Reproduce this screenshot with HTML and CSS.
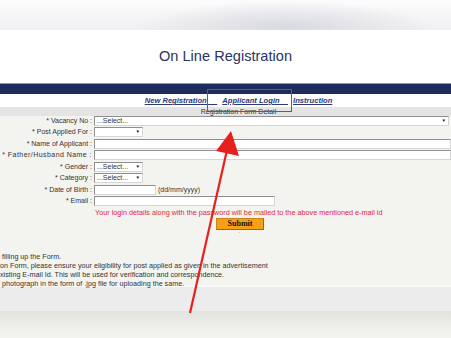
FILE: index.html
```html
<!DOCTYPE html>
<html lang="en">
<head>
  <meta charset="UTF-8">
  <title>On Line Registration</title>
  <link rel="stylesheet" href="styles.css">
</head>
<body>

<div class="topband"></div>

<header class="title">
  <h1>On Line Registration</h1>
</header>

<div class="navband"></div>

<nav class="links">
  <a href="#">New Registration&nbsp;&nbsp;&nbsp;&nbsp;&nbsp;</a>
  <a href="#">Applicant Login&nbsp;&nbsp;&nbsp;&nbsp;</a>
  <a href="#">Instruction</a>
</nav>

<div class="section-head">Registration Form Detail</div>

<form class="regform">
  <label>* Vacancy No :</label>
  <span class="sel wide"><select><option>...Select...</option></select></span>

  <label>* Post Applied For :</label>
  <span class="sel small"><select><option></option></select></span>

  <label>* Name of Applicant :</label>
  <input type="text" class="full">

  <label class="long">* Father/Husband Name :</label>
  <input type="text" class="full">

  <label>* Gender :</label>
  <span class="sel small"><select><option>...Select...</option></select></span>

  <label>* Category :</label>
  <span class="sel small"><select><option>...Select...</option></select></span>

  <label>* Date of Birth :</label>
  <div class="inline"><input type="text" class="dob"> <span>(dd/mm/yyyy)</span></div>

  <label>* Email :</label>
  <input type="text" class="email">

  <span></span>
  <p class="hint">Your login details along with the password will be mailed to the above mentioned e-mail id</p>

  <span></span>
  <div><button type="button" class="submit">Submit</button></div>
</form>

<div class="tick">'</div>

<div class="notes">
  <p>&nbsp;filling up the Form.</p>
  <p>on Form, please ensure your eligibility for post applied as given in the advertisement</p>
  <p>xisting E-mail Id. This will be used for verification and correspondence.</p>
  <p>&nbsp;photograph in the form of .jpg file for uploading the same.</p>
</div>

<div class="band"></div>
<div class="bottom"></div>

<div class="mark"></div>
<svg class="arrow" width="451" height="338" viewBox="0 0 451 338">
  <line x1="190" y1="313" x2="227" y2="150" stroke="#e6211d" stroke-width="2.2"/>
  <polygon points="231,131 216,151 239,156" fill="#e6211d"/>
</svg>

</body>
</html>
```

FILE: styles.css
```css
body {
  margin: 0;
  font-family: "Liberation Sans", Arial, sans-serif;
  background-color: #f3f3ef;
  width: 451px;
  height: 338px;
  overflow: hidden;
  position: relative;
}

.topband {
  height: 30px;
  background:
    radial-gradient(ellipse 150px 26px at 285px 27px, #d9dae0, rgba(236,237,241,0)),
    linear-gradient(#fcfcfd, #f0f0f3);
}

.title {
  height: 53px;
  background-color: #fff;
  display: flex;
  align-items: center;
  justify-content: center;
}

.title h1 {
  margin: 0 0 1px 0;
  font-size: 14.6px;
  font-weight: normal;
  color: #2b3462;
}

.navband {
  height: 10px;
  background-color: #1e2b5e;
  border-top: 1px solid #8d95b4;
}

.links {
  height: 13px;
  line-height: 13px;
  background-color: #fff;
  display: flex;
  justify-content: center;
  gap: 5px;
  padding-left: 26px;
  font-size: 7.6px;
  font-weight: bold;
  font-style: italic;
}

.links a {
  color: #2d3a78;
  white-space: pre;
}

.section-head {
  height: 9px;
  line-height: 9px;
  background-color: #e4e4e4;
  text-align: center;
  padding-left: 26px;
  font-size: 7px;
  color: #333;
}

.regform {
  display: grid;
  grid-template-columns: 92px 1fr;
  column-gap: 2px;
  grid-auto-rows: 10px;
  row-gap: 1.45px;
  margin: 0;
  padding-top: 0;
  font-size: 7px;
  color: #333;
}

.regform label {
  text-align: right;
  line-height: 10px;
  white-space: nowrap;
}

.regform label.long {
  letter-spacing: 0.45px;
}

.regform input,
.regform select {
  box-sizing: border-box;
  height: 10px;
  margin: 0;
  padding: 0 2px;
  font-family: "Liberation Sans", Arial, sans-serif;
  font-size: 7px;
  color: #333;
  background-color: #fff;
  border: 1px solid #d6d6d6;
  border-top-color: #8f8f8f;
  border-left-color: #8f8f8f;
  border-radius: 0;
  outline: none;
}

.sel {
  position: relative;
  display: block;
  height: 10px;
}

.sel select {
  -webkit-appearance: none;
  appearance: none;
  width: 100%;
  line-height: 8px;
}

.sel::after {
  content: "\25BC";
  position: absolute;
  right: 3px;
  top: 1px;
  font-size: 4.5px;
  line-height: 8px;
  color: #111;
}

.sel.wide { width: 355px; }
.sel.small { width: 49px; }

.full { width: 100%; }
.email { width: 181px; }

.inline {
  display: flex;
  align-items: center;
  gap: 2px;
  line-height: 10px;
}

.dob { width: 62px; }

.hint {
  margin: 0;
  line-height: 10px;
  padding-left: 1px;
  font-size: 7.25px;
  color: #e2283c;
  white-space: nowrap;
}

.regform .submit {
  margin: -1px 0 0 122px;
  width: 48px;
  height: 12px;
  padding: 0;
  background-color: #f7a016;
  border: 1px solid #c98412;
  border-right-color: #a56a0c;
  border-bottom-color: #a56a0c;
  font-family: "Liberation Serif", "Times New Roman", serif;
  font-size: 8px;
  font-weight: bold;
  color: #111;
}

.tick {
  margin-top: 2px;
  height: 8px;
  padding-left: 27px;
  text-align: center;
  font-size: 6px;
  color: #999;
}

.notes {
  margin-top: 12px;
  height: 33px;
  padding-top: 1px;
  font-size: 7.2px;
  color: #333;
  border-bottom: 2px solid #f8f8f4;
}

.notes p {
  margin: 0;
  height: 9px;
  line-height: 9px;
  white-space: nowrap;
}

.band {
  height: 24px;
  background-color: #ececec;
}

.bottom {
  height: 26px;
  background: linear-gradient(#e2e2df, #eeeeea 60%, #f2f2ee);
}

/* annotation overlays */
.mark {
  position: absolute;
  left: 207px;
  top: 89px;
  width: 83px;
  height: 21px;
  border: 1px solid #e0283a;
}

.arrow {
  position: absolute;
  left: 0;
  top: 0;
}
```
